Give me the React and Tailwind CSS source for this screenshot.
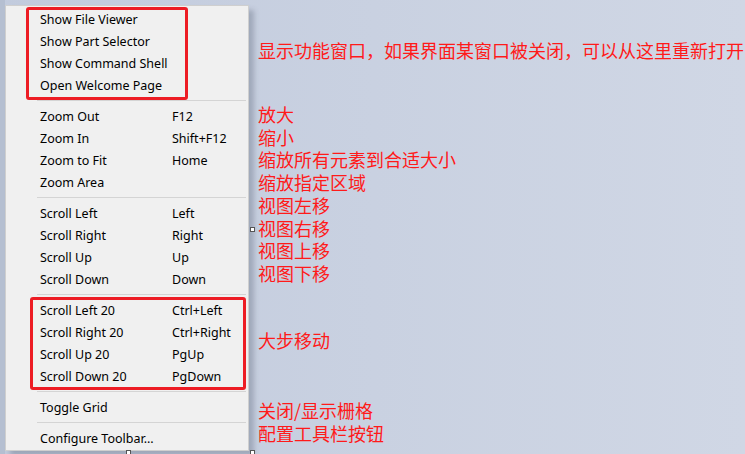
import React from 'react';

const groups = [
    [
        ['Show File Viewer', ''],
        ['Show Part Selector', ''],
        ['Show Command Shell', ''],
        ['Open Welcome Page', ''],
    ],
    [
        ['Zoom Out', 'F12'],
        ['Zoom In', 'Shift+F12'],
        ['Zoom to Fit', 'Home'],
        ['Zoom Area', ''],
    ],
    [
        ['Scroll Left', 'Left'],
        ['Scroll Right', 'Right'],
        ['Scroll Up', 'Up'],
        ['Scroll Down', 'Down'],
    ],
    [
        ['Scroll Left 20', 'Ctrl+Left'],
        ['Scroll Right 20', 'Ctrl+Right'],
        ['Scroll Up 20', 'PgUp'],
        ['Scroll Down 20', 'PgDown'],
    ],
    [['Toggle Grid', '']],
    [['Configure Toolbar...', '']],
];

const viewNotes = ['放大', '缩小', '缩放所有元素到合适大小', '缩放指定区域', '视图左移', '视图右移', '视图上移', '视图下移'];

function MenuRow({ label, shortcut }) {
    return (
        <div className="flex h-[22px] items-center pl-[34px] text-[12.5px] text-black">
            <span className="w-[132px]">{label}</span>
            <span>{shortcut}</span>
        </div>
    );
}

function Handle({ className }) {
    return <div className={`absolute h-[5px] w-[5px] border border-[#555] bg-white ${className}`} />;
}

export default function App() {
    return (
        <div className="relative flex h-[454px] w-[745px] overflow-hidden bg-gradient-to-r from-[#c2cbdd] to-[#d0d7e5] font-['Segoe_UI','Noto_Sans',sans-serif]">
            <div className="w-[5px] shrink-0 bg-[#b5bfd1]" />

            <div className="relative mt-[5px] h-[446px] w-[244px] shrink-0 border border-[#cfcfcf] bg-[#f0f0f0] pt-[3px] shadow-[5px_5px_5px_rgba(70,80,100,0.3)]">
                {groups.map((group, gi) => (
                    <div key={gi}>
                        {gi > 0 && (
                            <div className="h-[9px] pt-[3px]">
                                <div className="ml-[31px] mr-[2px] h-px bg-[#d4d4d4]" />
                            </div>
                        )}
                        {group.map(([label, shortcut]) => (
                            <MenuRow key={label} label={label} shortcut={shortcut} />
                        ))}
                    </div>
                ))}

                {/* red highlight boxes */}
                <div className="absolute left-[20px] top-[1px] h-[93px] w-[162px] rounded-[3px] border-[3px] border-[#ed1c24]" />
                <div className="absolute left-[24px] top-[291px] h-[93px] w-[216px] rounded-[3px] border-[3px] border-[#ed1c24]" />
            </div>

            <div className="ml-[9px] flex flex-col text-[18px] text-[#ff1a1a] font-['Microsoft_YaHei','Noto_Sans_CJK_SC',sans-serif]">
                <div className="mt-[38px] leading-[24px]">显示功能窗口，如果界面某窗口被关闭，可以从这里重新打开</div>
                <div className="mt-[41px]">
                    {viewNotes.map((t) => (
                        <div key={t} className="leading-[22.7px]">{t}</div>
                    ))}
                </div>
                <div className="mt-[43px] leading-[24px]">大步移动</div>
                <div className="mt-[47px] leading-[23px]">关闭/显示栅格</div>
                <div className="leading-[23px]">配置工具栏按钮</div>
            </div>

            <Handle className="left-[250px] top-[227px]" />
            <Handle className="left-[126px] top-[450px]" />
            <Handle className="left-[250px] top-[450px]" />
        </div>
    );
}
